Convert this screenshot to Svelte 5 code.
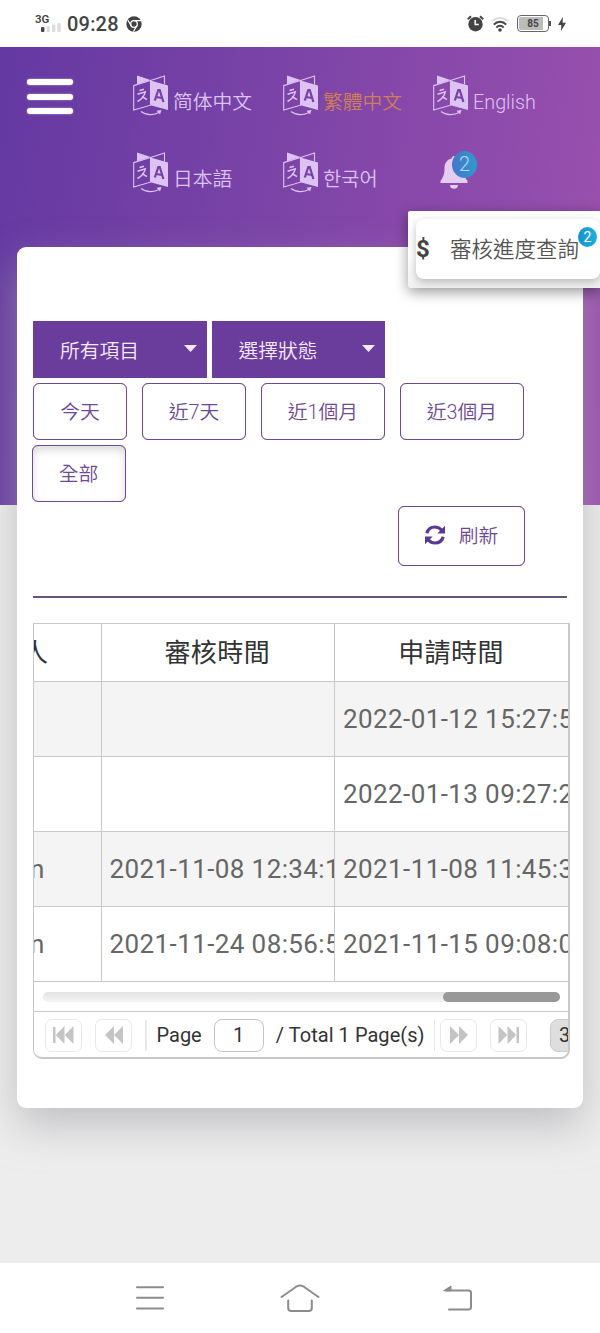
<script>
  let selectedLang = "tw";
  let selectedRange = "all";
  let page = 1;

  const langs = [
    { value: "cn", label: "简体中文" },
    { value: "tw", label: "繁體中文" },
    { value: "en", label: "English" },
    { value: "jp", label: "日本語" },
    { value: "kr", label: "한국어" },
  ];

  const filters = ["所有項目", "選擇狀態"];

  const ranges = [
    { value: "today", label: "今天", width: 94 },
    { value: "7d", label: "近7天", width: 104.5 },
    { value: "1m", label: "近1個月", width: 124 },
    { value: "3m", label: "近3個月", width: 124.5 },
    { value: "all", label: "全部", width: 94 },
  ];

  const rows = [
    { user: "", audited: "", applied: "2022-01-12 15:27:55" },
    { user: "", audited: "", applied: "2022-01-13 09:27:22" },
    { user: "n", audited: "2021-11-08 12:34:11", applied: "2021-11-08 11:45:33" },
    { user: "n", audited: "2021-11-24 08:56:55", applied: "2021-11-15 09:08:00" },
  ];
</script>

<div class="phone">
  <div class="status">
    <div class="signal">
      <span>3G</span>
      <svg width="20" height="10" viewBox="0 0 20 10">
        <rect x="0" y="4" width="3.4" height="5" rx="1" fill="#444" />
        <rect x="5.5" y="3" width="3.4" height="6" rx="1" fill="#ddd" />
        <rect x="11" y="1.5" width="3.4" height="7.5" rx="1" fill="#ddd" />
        <rect x="16.3" y="0" width="3.4" height="9" rx="1" fill="#ddd" />
      </svg>
    </div>
    <span class="clock">09:28</span>
    <svg class="chrome" width="16" height="16" viewBox="0 0 16 16">
      <circle cx="8" cy="8" r="7.7" fill="#444" />
      <circle cx="8" cy="8" r="3.3" fill="none" stroke="#fff" stroke-width="1.3" />
      <path d="M8 4.7h7M5.1 9.6L1.8 4M10.9 9.6L7.4 15.5" stroke="#fff" stroke-width="1.2" />
    </svg>
    <div class="status-right">
      <svg width="17" height="17" viewBox="0 0 17 17">
        <circle cx="8.5" cy="9.2" r="7.2" fill="#444" />
        <path d="M.8 4.2L4 1.2M16.2 4.2L13 1.2" stroke="#444" stroke-width="2" />
        <path d="M8.2 5v4.6h3.6" fill="none" stroke="#fff" stroke-width="1.5" />
      </svg>
      <svg class="wifi" width="18" height="15" viewBox="0 0 18 15">
        <g fill="none" stroke-width="2">
          <path d="M.7 4.4C5.5-.3 12.5-.3 17.3 4.4" stroke="#ddd" />
          <path d="M2.8 7.6C6.3 3.8 11.7 3.8 15.2 7.6" stroke="#444" />
          <path d="M5.4 10.6C7.4 8.2 10.6 8.2 12.6 10.6" stroke="#444" />
        </g>
        <circle cx="9" cy="13" r="1.8" fill="#444" />
      </svg>
      <div class="battery"><span>85</span></div>
      <svg width="8" height="14" viewBox="0 0 8 14">
        <path d="M4.8 0L0 8h3.3L3 14l5-8.2H4.6z" fill="#444" />
      </svg>
    </div>
  </div>

  <main>
    <header>
      <div class="menu"><i></i><i></i><i></i></div>
      <div class="langs">
        {#each langs as lang}
          <div
            class="lang"
            class:current={lang.value === selectedLang}
            on:click={() => (selectedLang = lang.value)}
          >
            <svg width="36" height="41" viewBox="0 0 36 41">
              <g fill="none" stroke="#dcc3f3" stroke-width="1.1">
                <path d="M.7 10.6L17.5 5.5V30.2L.7 35z" />
                <path d="M17.5 5.5L31.5.9V9.5" />
                <path d="M6.5 15.5l4.5-1.3M4.5 19.3l7.8-2.4c-1 4-3.5 7.4-7.8 9.6M9 21.5l5 3.2" stroke-width="1.5" />
                <path d="M8 36.5c5 4 13 4 18.5.7" />
              </g>
              <path d="M4 .6L17.5 5 4 9.2zM17.5 5.5L35 10.6V35L17.5 30.2z" fill="#dcc3f3" />
              <path d="M23.5 35.8l5-.8-1.5 4.600z" fill="#dcc3f3" />
              <path d="M21.800 25.500l3.500-10.500h1.400L30.400 27M23 22l6 1" fill="none" stroke="#7741a5" stroke-width="2.200" />
            </svg>
            <span>{lang.label}</span>
          </div>
        {/each}
        <div class="bell">
          <svg width="28" height="33" viewBox="0 0 28 33">
            <path d="M14 0c1.3 0 2.2.9 2.2 2.4 5 1 7.3 5 7.3 9.6 0 6.5 1 8.5 4 13v2H.5v-2c3-4.5 4-6.5 4-13 0-4.6 2.3-8.6 7.3-9.6C11.8.9 12.7 0 14 0z" fill="#e4cdf1" />
            <path d="M10 29h8c0 2.2-1.5 3.7-4 3.7S10 31.2 10 29z" fill="#e4cdf1" />
          </svg>
          <span class="badge">2</span>
          <div class="dropdown">
            <div class="dropdown-item">
              <b>$</b>
              <span>審核進度查詢</span>
              <em>2</em>
            </div>
          </div>
        </div>
      </div>
    </header>

    <section class="card">
      <div class="filters">
        {#each filters as filter}
          <div class="select">
            {filter}
            <svg width="13" height="8" viewBox="0 0 13 8"><path d="M0 0h13L6.5 7z" fill="#f6e9fb" /></svg>
          </div>
        {/each}
      </div>
      <div class="ranges">
        {#each ranges as range}
          <button
            class:active={range.value === selectedRange}
            style="width: {range.width}px"
            on:click={() => (selectedRange = range.value)}>{range.label}</button
          >
        {/each}
      </div>
      <div class="actions">
        <button class="refresh">
          <svg width="20" height="20" viewBox="0 0 20 20">
            <g fill="none" stroke="#5b3a94" stroke-width="3.2">
              <path d="M1.8 8.3C3 4 6.2 2 10 2c3 0 5 1.2 6.8 3.3" />
              <path d="M18.2 11.7C17 16 13.8 18 10 18c-3 0-5-1.2-6.8-3.3" />
            </g>
            <path d="M20 .8v7.7h-7.7zM0 19.2v-7.7h7.7z" fill="#5b3a94" />
          </svg>
          刷新
        </button>
      </div>
      <hr />

      <div class="grid">
        <div class="row head">
          <div class="cell user"><span>人</span></div>
          <div class="cell">審核時間</div>
          <div class="cell">申請時間</div>
        </div>
        {#each rows as row}
          <div class="row">
            <div class="cell user"><span>{row.user}</span></div>
            <div class="cell">{row.audited}</div>
            <div class="cell">{row.applied}</div>
          </div>
        {/each}
        <div class="scroll"><div class="track"><div class="thumb"></div></div></div>
        <div class="pager">
          <div class="page-btn">
            <svg width="21" height="18" viewBox="0 0 21 18"><path d="M0 1h2.5v16H0zM11.5 0v18L2.8 9zM20.5 0v18L11.8 9z" /></svg>
          </div>
          <div class="page-btn second">
            <svg width="18" height="18" viewBox="0 0 18 18"><path d="M9 0v18L0 9zM18 0v18L9 9z" /></svg>
          </div>
          <div class="line"></div>
          <span class="page-label">Page</span>
          <div class="page-input">{page}</div>
          <span class="total">/ Total 1 Page(s)</span>
          <div class="line end"></div>
          <div class="page-btn">
            <svg width="18" height="18" viewBox="0 0 18 18"><path d="M0 0v18l9-9zM9 0v18l9-9z" /></svg>
          </div>
          <div class="page-btn last">
            <svg width="21" height="18" viewBox="0 0 21 18"><path d="M18.5 1H21v16h-2.5zM.5 0v18l8.7-9zM9.5 0v18l8.7-9z" /></svg>
          </div>
          <div class="page-size">30</div>
        </div>
      </div>
    </section>
  </main>

  <nav>
    <svg width="28" height="26" viewBox="0 0 28 26">
      <path d="M1 2.2h26M1 12.8h26M1 23.5h26" />
    </svg>
    <svg class="home" width="40" height="30" viewBox="0 0 40 30">
      <path d="M1.5 14L16.5 3.5q3.5-2.2 7 0L38.5 14M8.200 17.5v7.5q0 3 3 3h17.6q3 0 3-3v-7.5" />
    </svg>
    <svg width="30" height="28" viewBox="0 0 30 28">
      <path d="M3 6.5h22.5q2.5 0 2.5 2.5v14q0 2.5-2.5 2.5H6" />
      <path d="M1 6.5L8 2v4.5z" fill="#8c8c8c" stroke-width="1" />
    </svg>
  </nav>
</div>

<style>
  :global(body) {
    margin: 0;
  }

  .phone {
    display: flex;
    flex-direction: column;
    width: 600px;
    height: 1333px;
    overflow: hidden;
    background: #fff;
    font-family: Roboto, "Noto Sans CJK TC", "Noto Sans CJK KR", sans-serif;
  }

  .status {
    display: flex;
    align-items: center;
    box-sizing: border-box;
    height: 47px;
    padding: 0 34px 0 35px;
    color: #444;
  }
  .signal {
    display: flex;
    flex-direction: column;
    width: 26px;
    font-size: 11.5px;
    font-weight: 600;
    line-height: 10px;
  }
  .signal svg {
    margin: -1px 0 0 6px;
  }
  .clock {
    margin-left: 6px;
    font-size: 20px;
    font-weight: 500;
    letter-spacing: 0.2px;
  }
  .chrome {
    margin-left: 7px;
  }
  .status-right {
    display: flex;
    align-items: center;
    margin-left: auto;
  }
  .wifi {
    margin: 2px 8px 0 7px;
  }
  .battery {
    position: relative;
    box-sizing: border-box;
    width: 32px;
    height: 17px;
    margin-right: 9px;
    border: 1.5px solid #666;
    border-radius: 4px;
    background: linear-gradient(90deg, #bbb 24px, #fff 24px) content-box;
    padding: 1px;
    font-size: 10px;
    font-weight: 700;
    line-height: 13px;
    text-align: center;
  }
  .battery::after {
    content: "";
    position: absolute;
    right: -3px;
    top: 5px;
    width: 2px;
    height: 5px;
    background: #555;
  }

  main {
    display: flex;
    flex-direction: column;
    flex: 1;
    background: linear-gradient(98deg, #6439a2, #7f45a8 50%, #9c51ae) 0 0 / 100% 458px no-repeat #ededed;
  }

  header {
    display: flex;
    height: 200px;
  }
  .menu {
    display: flex;
    flex-direction: column;
    gap: 8.5px;
    width: 46px;
    padding: 32px 60px 0 27px;
  }
  .menu i {
    height: 6px;
    border-radius: 3px;
    background: #fff;
    box-shadow: 0 0 2px #c9aee2;
  }
  .langs {
    display: grid;
    grid-template-columns: repeat(3, 150px);
    grid-auto-rows: 77px;
    padding-top: 28px;
  }
  .lang {
    display: flex;
    color: #dcc3f3;
    font-size: 19.8px;
    font-weight: 350;
    cursor: pointer;
  }
  .lang span {
    margin: 13px 0 0 4px;
    line-height: 30px;
    white-space: nowrap;
  }
  .lang.current span {
    color: #ce7f57;
  }

  .bell {
    position: relative;
    padding: 4px 0 0 7px;
  }
  .badge {
    position: absolute;
    left: 19px;
    top: -1px;
    width: 25px;
    height: 27px;
    border-radius: 50%;
    background: linear-gradient(90deg, #4775c8, #2c9bd0);
    color: #b8d5f3;
    font-size: 20px;
    font-weight: 300;
    line-height: 27px;
    text-align: center;
  }
  .dropdown {
    position: absolute;
    left: -25px;
    top: 59px;
    z-index: 1;
    width: 192px;
    height: 77px;
    box-sizing: border-box;
    padding: 8px 0 0 8px;
    border-radius: 2px 0 0 4px;
    background: linear-gradient(#fff 60%, #f1f1f1);
    box-shadow: 0 4px 14px rgba(0, 0, 0, 0.4);
  }
  .dropdown-item {
    position: relative;
    display: flex;
    align-items: center;
    height: 60px;
    border-radius: 8px;
    background: #fff;
    box-shadow: 0 3px 8px rgba(0, 0, 0, 0.25);
    color: #555;
    font-size: 21.5px;
    font-weight: 350;
    white-space: nowrap;
  }
  .dropdown-item span {
    padding-bottom: 3px;
  }
  .dropdown-item b {
    width: 34px;
    color: #444;
    font-size: 24px;
    font-weight: 700;
  }
  .dropdown-item em {
    position: absolute;
    left: 162px;
    top: 8px;
    width: 19px;
    height: 20px;
    border-radius: 50%;
    background: linear-gradient(90deg, #1b8fd3, #1bb2d8);
    color: #fff;
    font-size: 14px;
    font-style: normal;
    font-weight: 400;
    line-height: 20px;
    text-align: center;
  }

  .card {
    box-sizing: border-box;
    width: 566px;
    height: 861px;
    margin: 0 17px;
    padding: 74px 16px 0;
    border-radius: 9px;
    background: #fff;
    box-shadow: 0 18px 40px rgba(165, 165, 170, 0.6);
  }
  .filters {
    display: flex;
    gap: 5px;
  }
  .select {
    display: flex;
    align-items: center;
    justify-content: space-between;
    box-sizing: border-box;
    width: 173.5px;
    height: 57px;
    padding: 0 10px 1px 27px;
    background: #6a3c9b;
    color: #f6e9fb;
    font-size: 19.8px;
    font-weight: 350;
  }
  .ranges {
    display: flex;
    flex-wrap: wrap;
    gap: 5px 14.7px;
    margin-top: 5px;
  }
  button {
    box-sizing: border-box;
    height: 57px;
    padding: 0 0 2px;
    border: 1.5px solid #6d4a94;
    border-radius: 6px;
    background: #fff;
    color: #6d4a94;
    font: inherit;
    font-size: 19.8px;
    font-weight: 350;
    outline: 0.5px solid rgba(109, 74, 148, 0.4);
    outline-offset: -1.5px;
  }
  button.active {
    margin-left: -1.5px;
    box-shadow: inset 0 4px 8px rgba(0, 0, 0, 0.15);
  }
  .actions {
    display: flex;
    justify-content: flex-end;
    padding-right: 42px;
    margin-top: 4px;
  }
  .refresh {
    display: flex;
    align-items: center;
    justify-content: center;
    gap: 14px;
    width: 127px;
    height: 60px;
    padding-bottom: 3px;
  }
  hr {
    height: 1.5px;
    margin: 30px 0 25px;
    border: 0;
    background: #6b5279;
  }

  .grid {
    box-sizing: border-box;
    width: 537px;
    height: 436px;
    overflow: hidden;
    border: 1px solid #c8c8c8;
    border-width: 1px 2px 2px 1px;
    border-radius: 0 0 9px 9px;
  }
  .row {
    display: grid;
    grid-template-columns: 67.5px 233.5px 234px;
    box-sizing: border-box;
    height: 75px;
    border-bottom: 1.5px solid #c8c8c8;
    color: #666;
    font-size: 26px;
    line-height: 75px;
  }
  .row:nth-child(even) {
    background: #f4f4f4;
  }
  .row.head {
    height: 58.5px;
    color: #333;
    line-height: 58px;
    text-align: center;
  }
  .cell {
    overflow: hidden;
    padding-left: 8px;
    border-right: 1.5px solid #c8c8c8;
    white-space: nowrap;
    letter-spacing: 0.4px;
  }
  .head .cell {
    padding: 0 1px 0 0;
  }
  .cell.user {
    padding-left: 0;
    text-align: left;
  }
  /* first column is scrolled partly out of view */
  .user span {
    margin-left: -4px;
  }
  .head .user span {
    margin-left: -12px;
  }

  .scroll {
    box-sizing: border-box;
    height: 30px;
    padding: 10px 8px 0 9px;
    border-bottom: 1.5px solid #c8c8c8;
  }
  .track {
    height: 10px;
    border-radius: 5px;
    background: linear-gradient(#e3e3e3, #f3f3f3);
  }
  .thumb {
    width: 117px;
    height: 10px;
    margin-left: auto;
    border-radius: 5px;
    background: #999;
  }

  .pager {
    display: flex;
    align-items: center;
    box-sizing: border-box;
    width: 600px;
    height: 46px;
    padding-left: 11px;
    color: #333;
    font-size: 20px;
    white-space: nowrap;
  }
  .page-btn {
    display: flex;
    align-items: center;
    justify-content: center;
    box-sizing: border-box;
    width: 37px;
    height: 33px;
    border: 1.5px solid #e8e8e8;
    border-radius: 7px;
  }
  .page-btn path {
    fill: #c4c4c4;
  }
  .second,
  .last {
    margin-left: 13px;
  }
  .line {
    width: 1.5px;
    height: 31px;
    margin: 0 10px 0 13px;
    background: #e8e8e8;
  }
  .line.end {
    margin: 0 5px 0 9px;
  }
  .page-input {
    box-sizing: border-box;
    width: 50px;
    height: 33px;
    margin: 0 12px;
    border: 1.5px solid #c4c4c4;
    border-radius: 8px;
    line-height: 31px;
    text-align: center;
  }
  .total {
    letter-spacing: 0.05px;
  }
  .page-size {
    box-sizing: border-box;
    width: 60px;
    height: 33px;
    margin-left: 23px;
    padding-left: 8px;
    border: 1px solid #ccc;
    border-radius: 8px;
    background: #dedede;
    line-height: 31px;
  }

  nav {
    display: flex;
    align-items: center;
    justify-content: space-between;
    box-sizing: border-box;
    height: 70px;
    padding: 0 127px 0 136px;
    background: #fff;
  }
  nav svg {
    fill: none;
    stroke: #8c8c8c;
    stroke-width: 2;
    stroke-linecap: round;
  }
  nav .home {
    margin-right: 7px;
  }
</style>
